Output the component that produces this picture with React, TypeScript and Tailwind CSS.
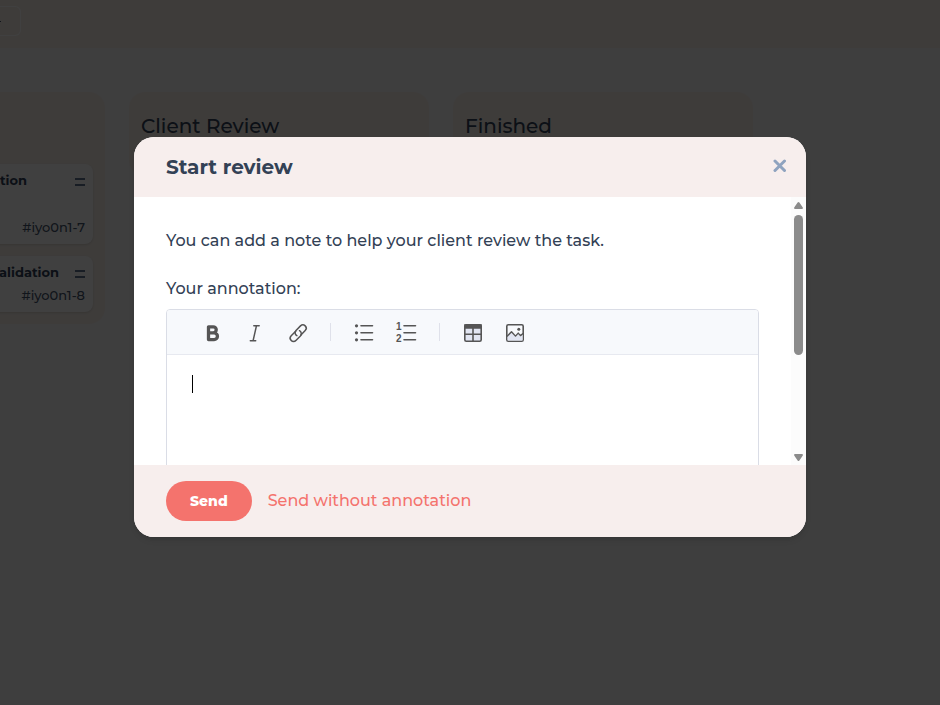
import type { ReactNode } from 'react';

interface TaskCardProps {
  title: string;
  id: string;
  titleClass: string;
  bodyClass: string;
}

function TaskCard({ title, id, titleClass, bodyClass }: TaskCardProps) {
  return (
    <article className={`flex flex-col justify-between rounded-lg bg-white px-2 pt-2 pb-[9px] shadow-sm ${bodyClass}`}>
      <div className="flex items-center justify-end leading-4">
        <h3 className={`text-[13px] font-bold text-slate-700 ${titleClass}`}>{title}</h3>
        <svg className="mt-1 h-[10px] w-[10px] text-slate-500" viewBox="0 0 10 10" stroke="currentColor" strokeWidth={2}>
          <path d="M0 2h10M0 8h10" />
        </svg>
      </div>
      <p className="text-right text-[13px] leading-4 font-medium text-slate-600">{id}</p>
    </article>
  );
}

interface ColumnProps {
  title: string;
  children?: ReactNode;
}

function Column({ title, children }: ColumnProps) {
  return (
    <section className="w-[300px] shrink-0 rounded-2xl bg-[#f6efe8] p-3">
      <h2 className="mt-2 mb-6 h-7 text-xl leading-7 font-medium text-slate-700">{title}</h2>
      <div className="flex flex-col gap-3">{children}</div>
    </section>
  );
}

interface ToolButtonProps {
  label: string;
  children: ReactNode;
}

function ToolButton({ label, children }: ToolButtonProps) {
  return (
    <button type="button" aria-label={label} className="h-8 w-8 rounded text-[#555555]">
      <svg className="h-8 w-8" viewBox="0 0 32 32" fill="none" stroke="currentColor" strokeWidth={1.6} strokeLinecap="round">
        {children}
      </svg>
    </button>
  );
}

function Divider() {
  return <span className="mx-[7px] h-[18px] w-px bg-[#dfe1ea]" />;
}

function Toolbar() {
  return (
    <div className="flex h-[45px] items-center gap-[10px] border-b border-[#e7e9f0] bg-[#f7f9fc] pl-[30px]">
      <ToolButton label="Bold">
        <path d="M11.5 10.8v12.8M11.5 10.8h4.7a3 3 0 0 1 0 6.1h-4.7M16.2 16.9h.9a3.3 3.3 0 0 1 0 6.7h-5.6" strokeWidth={3.3} strokeLinejoin="round" />
      </ToolButton>
      <ToolButton label="Italic">
        <path d="M14.8 9.7h5.4M11.3 24.7h5.4M17.5 9.7l-3.4 15" strokeWidth={1.5} />
      </ToolButton>
      <ToolButton label="Link">
        <path d="M19.7 19.2l4.5-4.6a3.3 3.3 0 0 0-4.7-4.7L15 14.4a3.4 3.4 0 0 0 .9 5.3" strokeWidth={1.5} />
        <path d="M14.7 15.2l-4.5 4.6a3.3 3.3 0 0 0 4.7 4.7l4.5-4.5a3.4 3.4 0 0 0-.9-5.3" strokeWidth={1.5} />
      </ToolButton>
      <Divider />
      <ToolButton label="Unordered list">
        <path d="M13 9.8h11.5M13 16.8h11.5M13 23.8h11.5" />
        <g fill="currentColor" stroke="none">
          <circle cx="8.5" cy="9.8" r="1.6" />
          <circle cx="8.5" cy="16.8" r="1.6" />
          <circle cx="8.5" cy="23.8" r="1.6" />
        </g>
      </ToolButton>
      <ToolButton label="Ordered list">
        <path d="M14 9.8h11.5M14 16.8h11.5M14 23.8h11.5" />
        <g fill="currentColor" stroke="none" className="font-['Liberation_Sans',sans-serif] text-[10px] font-bold">
          <text x="6" y="14">1</text>
          <text x="6" y="26">2</text>
        </g>
      </ToolButton>
      <Divider />
      <ToolButton label="Insert table">
        <rect x="7.8" y="8.8" width="16.4" height="16.4" rx="1.5" fill="#e1e5f2" />
        <path d="M8 9h16v3H8z" fill="currentColor" strokeLinecap="butt" />
        <path d="M16 12v13M8 18.3h16" />
      </ToolButton>
      <ToolButton label="Insert image">
        <rect x="7.8" y="8.8" width="16.4" height="16.4" rx="1.5" />
        <path d="M8.6 19.6l3.8-3.8 3.6 4 2.8-3 2.6 3 2.2-1.2v5.8H8.6z" fill="#e1e5f2" stroke="none" />
        <path d="M8.4 20l4.1-4.3 4 4.4 2.7-3 2.3 2.5 2.2-1.8" strokeLinejoin="round" strokeWidth={1.4} />
        <circle cx="19.8" cy="13.3" r="1.5" fill="currentColor" stroke="none" />
      </ToolButton>
    </div>
  );
}

function Scrollbar() {
  return (
    <div aria-hidden="true" className="flex w-[15px] shrink-0 flex-col items-center bg-[#fcfcfc] py-1">
      <svg className="mt-px h-[7px] w-[9px]" viewBox="0 0 9 7" fill="#8b8b8b">
        <path d="M4.5 0q.5 0 .9.6L8.8 5.6Q9.2 7 8 7H1Q-.2 7 .2 5.6L3.6.6Q4 0 4.5 0z" />
      </svg>
      <div className="mt-[6px] h-[140px] w-[9px] rounded-full bg-[#8b8b8b]" />
      <svg className="mt-auto h-[7px] w-[9px]" viewBox="0 0 9 7" fill="#8b8b8b">
        <path d="M4.5 7q.5 0 .9-.6L8.8 1.4Q9.2 0 8 0H1Q-.2 0 .2 1.4L3.6 6.4Q4 7 4.5 7z" />
      </svg>
    </div>
  );
}

function ReviewDialog() {
  return (
    <div
      role="dialog"
      aria-modal="true"
      aria-labelledby="review-title"
      className="w-full max-w-2xl overflow-hidden rounded-[20px] bg-white shadow-md"
    >
      {/* Header */}
      <header className="flex h-[60px] items-center justify-between bg-[#f7eeed] pr-[19px] pl-8">
        <h1 id="review-title" className="text-xl leading-7 font-bold text-[#334155]">
          Start review
        </h1>
        <button type="button" aria-label="Close" className="pb-[2px]">
          <svg className="h-[14px] w-[14px]" viewBox="0 0 14 14" stroke="#8fa3bf" strokeWidth={3} strokeLinecap="round">
            <path d="M2 2l9.5 9.5M11.5 2L2 11.5" />
          </svg>
        </button>
      </header>

      {/* Body */}
      <div className="flex h-[268px]">
        <div className="min-w-0 flex-1 overflow-hidden px-8 pt-8">
          <p className="mb-6 leading-6 font-medium text-[#334155]">
            You can add a note to help your client review the task.
          </p>
          <label htmlFor="annotation" className="mb-2 block leading-6 font-medium text-[#334155]">
            Your annotation:
          </label>
          <div className="overflow-hidden rounded border border-[#dadde6]">
            <Toolbar />
            <div className="relative">
              <textarea
                id="annotation"
                className="block h-[250px] w-full resize-none px-[25px] py-5 text-[13px] caret-transparent outline-none"
              />
              <span className="absolute top-5 left-[25px] h-[18px] w-px bg-black" />
            </div>
          </div>
        </div>
        <Scrollbar />
      </div>

      {/* Footer */}
      <footer className="flex items-center gap-4 bg-[#f7eeed] px-8 py-4">
        <button type="button" className="h-10 rounded-full bg-[#f4736d] px-6 text-sm font-extrabold text-white">
          Send
        </button>
        <button type="button" className="leading-6 font-medium text-[#f4736d]">
          Send without annotation
        </button>
      </footer>
    </div>
  );
}

export default function App() {
  return (
    <div className="relative min-h-screen overflow-hidden bg-[#f5f5f5] font-['Montserrat','Inter',sans-serif]">
      {/* Top bar */}
      <div className="flex h-12 bg-[#f6efe8]">
        <div className="mt-[6px] flex h-[30px] w-[21px] items-center rounded-r-md border border-l-0 border-white">
          <span className="h-px w-px bg-slate-600" />
        </div>
      </div>

      {/* Board, scrolled to the right */}
      <main className="mt-11 -ml-[195px] flex items-start gap-6">
        <Column title="">
          <TaskCard title="Documentation" id="#iyo0n1-7" titleClass="mr-12" bodyClass="h-20" />
          <TaskCard title="Validation" id="#iyo0n1-8" titleClass="mr-4" bodyClass="h-14" />
        </Column>
        <Column title="Client Review" />
        <Column title="Finished" />
      </main>

      {/* Modal */}
      <div className="absolute inset-0 flex items-start justify-center bg-black/75 pt-[137px]">
        <ReviewDialog />
      </div>
    </div>
  );
}
